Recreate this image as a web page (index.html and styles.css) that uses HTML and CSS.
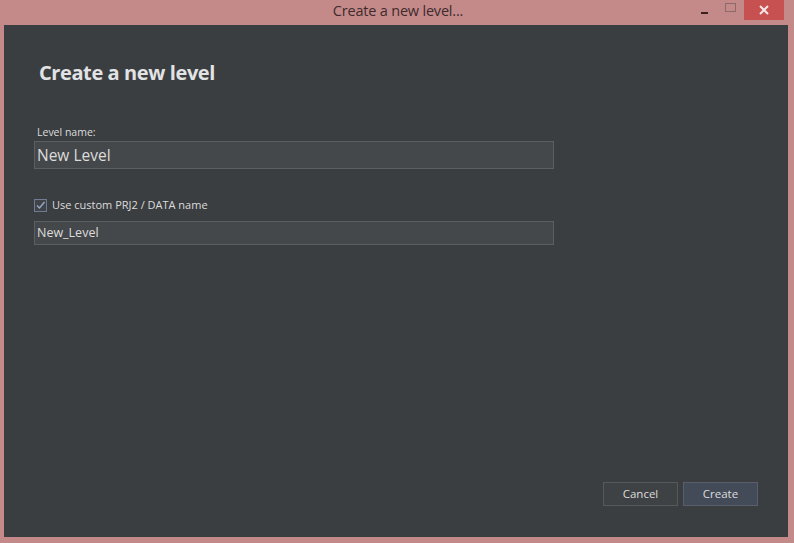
FILE: index.html
```html
<!DOCTYPE html>
<html>
<head>
<meta charset="utf-8">
<link rel="stylesheet" href="styles.css">
</head>
<body>
<div class="titlebar">
  <div></div>
  <div class="title">Create a new level...</div>
  <div class="controls">
    <div class="ctl min"><span></span></div>
    <div class="ctl max"><span></span></div>
    <div class="ctl close">
      <svg width="12" height="12" viewBox="0 0 12 12"><path d="M2 2L10 10M10 2L2 10" stroke="#f4e6e6" stroke-width="2"/></svg>
    </div>
  </div>
</div>
<div class="window">
  <h1 class="heading">Create a new level</h1>
  <div class="label">Level name:</div>
  <div class="input big">New Level</div>
  <div class="check-row">
    <div class="checkbox">
      <svg width="11" height="11" viewBox="0 0 11 11"><path d="M2 5.5L4.5 8L9.5 2" fill="none" stroke="#9aa6c4" stroke-width="1.5"/></svg>
    </div>
    <span class="check-label">Use custom PRJ2 / DATA name</span>
  </div>
  <div class="input small">New_Level</div>
  <div class="spacer"></div>
  <div class="buttons">
    <div class="btn">Cancel</div>
    <div class="btn primary">Create</div>
  </div>
</div>
</body>
</html>
```
FILE: styles.css
```css
html, body {
  margin: 0;
  padding: 0;
}
body {
  width: 794px;
  height: 543px;
  background: #c48a8a;
  display: flex;
  flex-direction: column;
  font-family: "Open Sans", "Noto Sans", sans-serif;
  overflow: hidden;
}
.titlebar {
  height: 25px;
  display: grid;
  grid-template-columns: 1fr auto 1fr;
  align-items: start;
}
.title {
  font-size: 14.5px;
  line-height: 22px;
  color: #3e2a2c;
  letter-spacing: -0.2px;
  padding-left: 2px;
}
.controls {
  justify-self: end;
  display: flex;
  margin-right: 10px;
}
.ctl {
  height: 20px;
  display: flex;
  align-items: center;
  justify-content: center;
}
.min {
  width: 26px;
}
.min span {
  width: 7px;
  height: 2px;
  background: #3a2020;
  margin-top: 6px;
  margin-right: 6px;
}
.max {
  width: 24px;
}
.max span {
  width: 9px;
  height: 7px;
  border: 1px solid #8c6a6a;
  margin-top: -6px;
  margin-right: 4px;
}
.close {
  width: 40px;
  background: #c75050;
}
.window {
  flex: 1;
  margin: 0 6px 6px 4px;
  background: #3b3e41;
  display: flex;
  flex-direction: column;
  padding: 0 30px 31px 30px;
}
.heading {
  margin: 34px 0 0 5px;
  font-size: 20px;
  line-height: 28px;
  font-weight: bold;
  color: #e2e3e4;
  letter-spacing: -0.4px;
}
.label {
  margin: 38px 0 0 3px;
  font-size: 10.5px;
  line-height: 14px;
  color: #dcdcdc;
}
.input {
  width: 520px;
  box-sizing: border-box;
  background: #45484a;
  border: 1px solid #5c5f61;
  color: #dcdcdc;
  padding-left: 2px;
}
.input.big {
  margin-top: 2px;
  height: 28px;
  font-size: 15.5px;
  line-height: 26px;
}
.input.small {
  margin-top: 9px;
  height: 24px;
  font-size: 12.5px;
  line-height: 22px;
}
.check-row {
  margin-top: 29px;
  display: flex;
  align-items: center;
  gap: 5px;
}
.checkbox {
  width: 13px;
  height: 13px;
  box-sizing: border-box;
  border: 1px solid #707c94;
  background: #3f4449;
  display: flex;
  align-items: center;
  justify-content: center;
}
.check-label {
  font-size: 11px;
  line-height: 14px;
  color: #dcdcdc;
}
.spacer {
  flex: 1;
}
.buttons {
  display: flex;
  justify-content: flex-end;
  gap: 5px;
}
.btn {
  width: 75px;
  height: 24px;
  box-sizing: border-box;
  border: 1px solid #56595b;
  background: #3f4244;
  color: #dcdcdc;
  font-size: 11.5px;
  line-height: 22px;
  text-align: center;
}
.btn.primary {
  background: #434a58;
  border-color: #585e6a;
}
```
